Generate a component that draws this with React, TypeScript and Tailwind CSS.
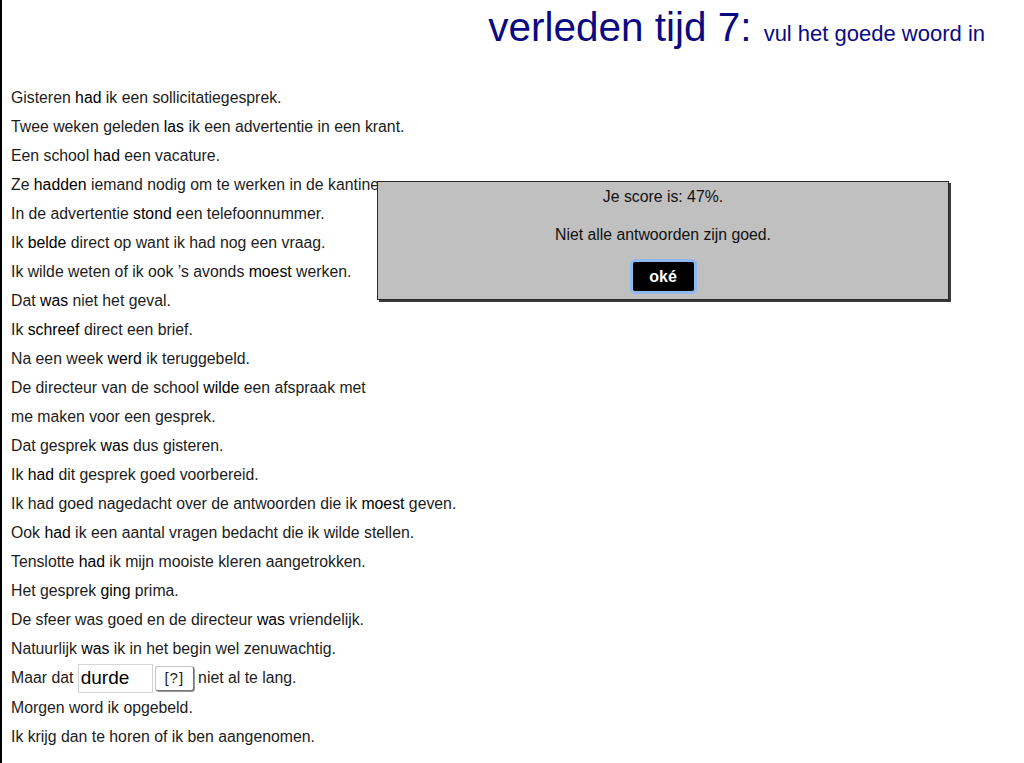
import { useState } from "react";

type Line = { before: string; word?: string; after: string };

// zinnen met het ingevulde werkwoord apart
const lines: Line[] = [
  { before: "Gisteren ", word: "had", after: " ik een sollicitatiegesprek." },
  { before: "Twee weken geleden ", word: "las", after: " ik een advertentie in een krant." },
  { before: "Een school ", word: "had", after: " een vacature." },
  { before: "Ze ", word: "hadden", after: " iemand nodig om te werken in de kantine." },
  { before: "In de advertentie ", word: "stond", after: " een telefoonnummer." },
  { before: "Ik ", word: "belde", after: " direct op want ik had nog een vraag." },
  { before: "Ik wilde weten of ik ook \u2019s avonds ", word: "moest", after: " werken." },
  { before: "Dat ", word: "was", after: " niet het geval." },
  { before: "Ik ", word: "schreef", after: " direct een brief." },
  { before: "Na een week ", word: "werd", after: " ik teruggebeld." },
  { before: "De directeur van de school ", word: "wilde", after: " een afspraak met" },
  { before: "me maken voor een gesprek.", after: "" },
  { before: "Dat gesprek ", word: "was", after: " dus gisteren." },
  { before: "Ik ", word: "had", after: " dit gesprek goed voorbereid." },
  { before: "Ik had goed nagedacht over de antwoorden die ik ", word: "moest", after: " geven." },
  { before: "Ook ", word: "had", after: " ik een aantal vragen bedacht die ik wilde stellen." },
  { before: "Tenslotte ", word: "had", after: " ik mijn mooiste kleren aangetrokken." },
  { before: "Het gesprek ", word: "ging", after: " prima." },
  { before: "De sfeer was goed en de directeur ", word: "was", after: " vriendelijk." },
  { before: "Natuurlijk ", word: "was", after: " ik in het begin wel zenuwachtig." },
];

const tail: Line[] = [
  { before: "Morgen word ik opgebeld.", after: "" },
  { before: "Ik krijg dan te horen of ik ben aangenomen.", after: "" },
];

function Sentence({ line }: { line: Line }) {
  return (
    <p className="flex h-[29px] items-center whitespace-pre">
      <span>{line.before}</span>
      {line.word && <span className="text-black">{line.word}</span>}
      <span>{line.after}</span>
    </p>
  );
}

export default function App() {
  const [answer, setAnswer] = useState("durde");
  const [open, setOpen] = useState(true);

  return (
    <div className="relative min-h-screen border-l-2 border-black bg-white font-['Liberation_Sans',Arial,sans-serif] text-[#1c1c1c]">
      {/* titel */}
      <h1 className="flex items-baseline justify-end gap-3 pr-[39px] pt-[5px] text-[#0a0a82]">
        <span className="text-[40.5px] leading-[45px]">verleden tijd 7:</span>
        <span className="text-[22px]">vul het goede woord in</span>
      </h1>

      {/* oefening */}
      <div className="pl-[9px] pt-[33px] text-[15.8px]">
        {lines.map((line, i) => (
          <Sentence key={i} line={line} />
        ))}

        <div className="flex h-[30px] items-center whitespace-pre">
          <span>Maar dat </span>
          <input
            value={answer}
            onChange={(e) => setAnswer(e.target.value)}
            className="h-[29px] w-[75px] border border-[#d4d4d4] bg-white px-[2px] text-[19px] text-black outline-none"
          />
          <button className="ml-[2px] h-[25px] w-[39px] rounded-[3px] border border-[#c4c4c4] border-b-[#777] border-r-[#777] bg-white text-[15px] tracking-[1px] shadow-[1px_1px_0_#999]">
            [?]
          </button>
          <span> niet al te lang.</span>
        </div>

        {tail.map((line, i) => (
          <Sentence key={i} line={line} />
        ))}
        <div className="h-[20px]" />
      </div>

      {/* uitslag */}
      {open && (
        <div className="absolute left-[375px] top-[181px] flex h-[119px] w-[572px] flex-col items-center border border-[#2a2a2a] bg-[#c0c0c0] text-[15.8px] text-[#111] shadow-[2px_2px_0_#3a3a3a]">
          <p className="mt-[6px] leading-[18px]">Je score is: 47%.</p>
          <p className="mt-[20px] leading-[18px]">Niet alle antwoorden zijn goed.</p>
          <button
            onClick={() => setOpen(false)}
            className="mt-[15px] h-[35px] w-[67px] rounded-[5px] border-[3px] border-[#8fb8ec] bg-black text-[16px] font-semibold text-white"
          >
            oké
          </button>
        </div>
      )}
    </div>
  );
}
